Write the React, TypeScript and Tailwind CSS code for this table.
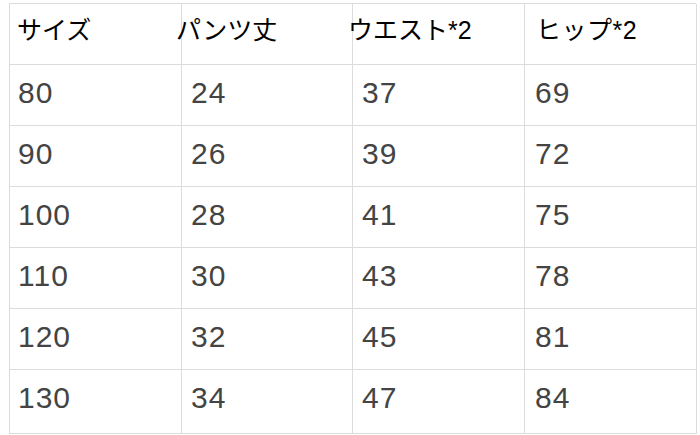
const headers = [
  { label: "サイズ", cls: "pl-[7px]" },
  { label: "パンツ丈", cls: "pl-0 -ml-[6px]" },
  { label: "ウエスト*2", cls: "pl-0 -ml-[5px]" },
  { label: "ヒップ*2", cls: "pl-[11px] tracking-[0.5px]" },
]

const rows = [
  ["80", "24", "37", "69"],
  ["90", "26", "39", "72"],
  ["100", "28", "41", "75"],
  ["110", "30", "43", "78"],
  ["120", "32", "45", "81"],
  ["130", "34", "47", "84"],
]

const dataPad = ["pl-[8px]", "pl-[9px]", "pl-[9px]", "pl-[10px]"]

export default function App() {
  return (
    <div className="w-[700px] h-[435px] bg-white overflow-hidden pt-[3px] pl-[9px]">
      <div className="w-[687px] border-t border-l border-[#dcdcdc] font-['Liberation_Sans','Noto_Sans_CJK_JP',sans-serif]">
        <div className="grid grid-cols-[172px_171px_172px_172px] h-[61px]">
          {headers.map((h, i) => (
            <div key={i} className="border-r border-b border-[#dcdcdc] flex items-start pt-[8px]">
              <span className={`text-[25px] leading-[36px] text-black whitespace-nowrap ${h.cls}`}>{h.label}</span>
            </div>
          ))}
        </div>
        {rows.map((r, ri) => (
          <div key={ri} className={`grid grid-cols-[172px_171px_172px_172px] ${ri === rows.length - 1 ? "h-[64px]" : "h-[61px]"}`}>
            {r.map((v, ci) => (
              <div key={ci} className={`border-r border-b border-[#dcdcdc] flex items-start pt-[10px] ${dataPad[ci]}`}>
                <span className="text-[30px] leading-[36px] tracking-[1px] text-[#444444]">{v}</span>
              </div>
            ))}
          </div>
        ))}
      </div>
    </div>
  )
}
